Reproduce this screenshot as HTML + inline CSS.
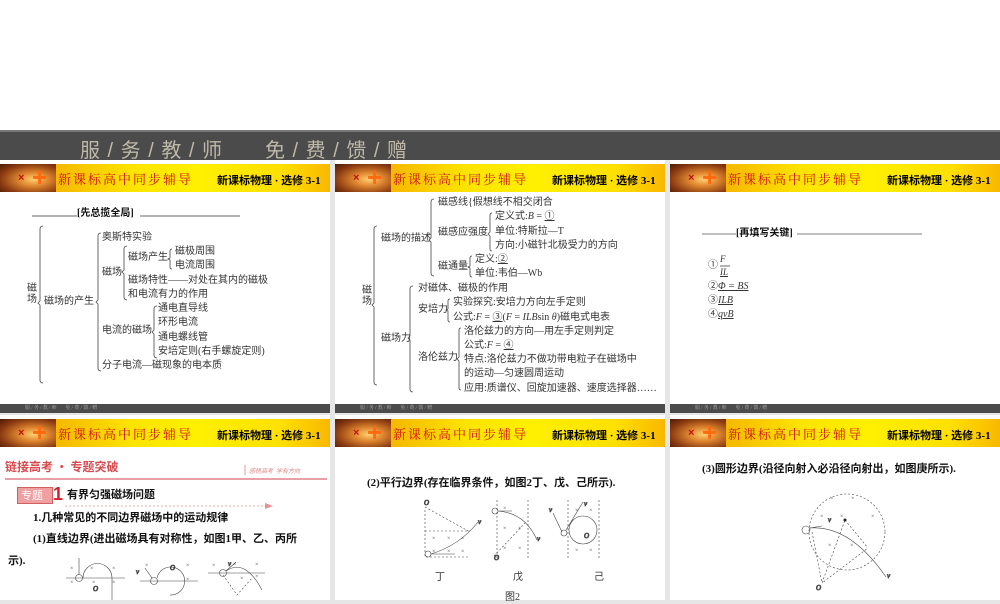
<!DOCTYPE html>
<html><head><meta charset="utf-8"><style>
*{margin:0;padding:0;box-sizing:border-box}
body{width:1000px;height:600px;overflow:hidden;background:#e6e6e6;position:relative;font-family:"Liberation Serif","Noto Serif CJK SC","Noto Sans CJK SC",serif;color:#222}
.top{position:absolute;left:0;top:0;width:1000px;height:130px;background:#fff}
.band{position:absolute;left:0;top:130px;width:1000px;height:30px;background:#4b4b4b;border-top:2px solid #777}
.band span{position:absolute;top:2px;font-family:"Liberation Sans","Noto Sans CJK SC",sans-serif;font-size:20px;color:#bdb8a8;letter-spacing:1px}
.s{position:absolute;width:330px;background:#fff;overflow:hidden}
.hd{position:absolute;left:0;top:4px;width:330px;height:28px;background:linear-gradient(90deg,#e07a10 0,#f5b800 17%,#fde400 40%,#fff000 60%,#ffe000 85%,#f8b800 100%)}
.img{position:absolute;left:0;top:0;width:56px;height:28px;background:radial-gradient(ellipse at 60% 55%,#ffd070 0,#e08830 30%,#8a3a10 70%,#4a1a08 100%)}
.plus{position:absolute;left:32px;top:-2px;color:#ff6a10;font:bold 26px "Liberation Sans",sans-serif}
.x{position:absolute;left:18px;top:8px;color:#c01010;font:bold 11px "Liberation Sans",sans-serif}
.ttl{position:absolute;left:58px;top:5px;font-family:"Noto Serif CJK SC",serif;font-size:13px;color:#d0101a;letter-spacing:2px}
.rt{position:absolute;left:217px;top:8px;font-family:"Liberation Serif","Noto Sans CJK SC",serif;font-weight:bold;font-size:11px;color:#000}
.ft{position:absolute;left:0;width:330px;height:9px;background:#4b4b4b;font-size:5px;color:#aaa;padding-left:25px;line-height:9px}
.t{position:absolute;font-size:10px;line-height:12px;white-space:nowrap;font-family:"Liberation Serif","Noto Sans CJK SC",sans-serif;color:#333}
.b{font-weight:bold;color:#111;font-size:11px}
svg{position:absolute;left:0;top:0}
</style></head><body>
<div class="top"></div>
<div class="band"><span style="left:80px">服 / 务 / 教 / 师</span><span style="left:265px">免 / 费 / 馈 / 赠</span></div>

<div class="s" style="left:0;top:160px;height:253px"><div class="hd"><div class="img"><span class="x">×</span><span class="plus">+</span></div><div class="ttl">新课标高中同步辅导</div><div class="rt">新课标物理 · 选修 3-1</div></div><div class="ft" style="top:244px">服 / 务 / 教 / 师 &nbsp;&nbsp;&nbsp;&nbsp;&nbsp; 免 / 费 / 馈 / 赠</div></div>
<div class="s" style="left:335px;top:160px;height:253px"><div class="hd"><div class="img"><span class="x">×</span><span class="plus">+</span></div><div class="ttl">新课标高中同步辅导</div><div class="rt">新课标物理 · 选修 3-1</div></div><div class="ft" style="top:244px">服 / 务 / 教 / 师 &nbsp;&nbsp;&nbsp;&nbsp;&nbsp; 免 / 费 / 馈 / 赠</div></div>
<div class="s" style="left:670px;top:160px;height:253px"><div class="hd"><div class="img"><span class="x">×</span><span class="plus">+</span></div><div class="ttl">新课标高中同步辅导</div><div class="rt">新课标物理 · 选修 3-1</div></div><div class="ft" style="top:244px">服 / 务 / 教 / 师 &nbsp;&nbsp;&nbsp;&nbsp;&nbsp; 免 / 费 / 馈 / 赠</div></div>
<div class="s" style="left:0;top:415px;height:185px"><div class="hd"><div class="img"><span class="x">×</span><span class="plus">+</span></div><div class="ttl">新课标高中同步辅导</div><div class="rt">新课标物理 · 选修 3-1</div></div></div>
<div class="s" style="left:335px;top:415px;height:185px"><div class="hd"><div class="img"><span class="x">×</span><span class="plus">+</span></div><div class="ttl">新课标高中同步辅导</div><div class="rt">新课标物理 · 选修 3-1</div></div></div>
<div class="s" style="left:670px;top:415px;height:185px"><div class="hd"><div class="img"><span class="x">×</span><span class="plus">+</span></div><div class="ttl">新课标高中同步辅导</div><div class="rt">新课标物理 · 选修 3-1</div></div></div>

<div class="t b" style="left:77px;top:208px;font-size:10px">[先总揽全局]</div>
<div class="t" style="left:27px;top:283px;width:11px;white-space:normal;line-height:11px">磁场</div>
<div class="t" style="left:44px;top:296px">磁场的产生</div>
<div class="t" style="left:102px;top:232px">奥斯特实验</div>
<div class="t" style="left:102px;top:267px">磁场</div>
<div class="t" style="left:128px;top:252px">磁场产生</div>
<div class="t" style="left:175px;top:246px">磁极周围</div>
<div class="t" style="left:175px;top:260px">电流周围</div>
<div class="t" style="left:128px;top:275px">磁场特性——对处在其内的磁极</div>
<div class="t" style="left:128px;top:289px">和电流有力的作用</div>
<div class="t" style="left:102px;top:325px">电流的磁场</div>
<div class="t" style="left:158px;top:303px">通电直导线</div>
<div class="t" style="left:158px;top:317px">环形电流</div>
<div class="t" style="left:158px;top:332px">通电螺线管</div>
<div class="t" style="left:158px;top:346px">安培定则(右手螺旋定则)</div>
<div class="t" style="left:102px;top:360px">分子电流—磁现象的电本质</div>

<div class="t" style="left:362px;top:285px;width:11px;white-space:normal;line-height:11px">磁场</div>
<div class="t" style="left:381px;top:233px">磁场的描述</div>
<div class="t" style="left:438px;top:197px">磁感线{假想线不相交闭合</div>
<div class="t" style="left:438px;top:227px">磁感应强度</div>
<div class="t" style="left:495px;top:211px">定义式:<i>B</i> = <u>①</u></div>
<div class="t" style="left:495px;top:226px">单位:特斯拉—T</div>
<div class="t" style="left:495px;top:240px">方向:小磁针北极受力的方向</div>
<div class="t" style="left:438px;top:261px">磁通量</div>
<div class="t" style="left:475px;top:254px">定义:<u>②</u></div>
<div class="t" style="left:475px;top:268px">单位:韦伯—Wb</div>
<div class="t" style="left:418px;top:283px">对磁体、磁极的作用</div>
<div class="t" style="left:418px;top:304px">安培力</div>
<div class="t" style="left:453px;top:297px">实验探究:安培力方向左手定则</div>
<div class="t" style="left:453px;top:312px">公式:<i>F</i> = <u>③</u>(<i>F</i> = <i>ILB</i>sin <i>θ</i>)磁电式电表</div>
<div class="t" style="left:381px;top:333px">磁场力</div>
<div class="t" style="left:418px;top:352px">洛伦兹力</div>
<div class="t" style="left:464px;top:326px">洛伦兹力的方向—用左手定则判定</div>
<div class="t" style="left:464px;top:340px">公式:<i>F</i> = <u>④</u></div>
<div class="t" style="left:464px;top:354px">特点:洛伦兹力不做功带电粒子在磁场中</div>
<div class="t" style="left:464px;top:368px">的运动—匀速圆周运动</div>
<div class="t" style="left:464px;top:383px">应用:质谱仪、回旋加速器、速度选择器……</div>

<div class="t b" style="left:736px;top:228px;font-size:10px">[再填写关键]</div>
<div class="t" style="left:708px;top:260px">①</div>
<div class="t" style="left:720px;top:253px;font-size:9px"><i>F</i></div>
<div class="t" style="left:720px;top:266px;font-size:9px"><i><u>IL</u></i></div>
<div class="t" style="left:708px;top:281px">②<i><u>Φ = BS</u></i></div>
<div class="t" style="left:708px;top:295px">③<i><u>ILB</u></i></div>
<div class="t" style="left:708px;top:309px">④<i><u>qvB</u></i></div>

<div class="t" style="left:5px;top:461px;font-size:12px;font-weight:bold;color:#d84a50;font-family:'Noto Sans CJK SC',sans-serif">链接高考 · 专题突破</div>
<div class="t" style="left:249px;top:466px;font-size:6px;color:#d88;font-style:italic">感悟高考 &nbsp;学有方向</div>
<div style="position:absolute;left:17px;top:487px;width:36px;height:17px;background:#f0a0a0;border:1px solid #d06060"></div>
<div class="t" style="left:21px;top:489px;font-size:11px;color:#fff;font-family:'Noto Sans CJK SC',sans-serif">专题</div>
<div class="t" style="left:53px;top:484px;font-size:18px;line-height:20px;color:#d02030;font-weight:bold;font-family:'Liberation Sans',sans-serif">1</div>
<div class="t b" style="left:67px;top:489px">有界匀强磁场问题</div>
<div class="t b" style="left:33px;top:512px">1.几种常见的不同边界磁场中的运动规律</div>
<div class="t b" style="left:33px;top:533px">(1)直线边界(进出磁场具有对称性，如图1甲、乙、丙所</div>
<div class="t b" style="left:8px;top:555px">示).</div>

<div class="t b" style="left:367px;top:477px">(2)平行边界(存在临界条件，如图2丁、戊、己所示).</div>
<div class="t" style="left:435px;top:572px">丁</div>
<div class="t" style="left:513px;top:572px">戊</div>
<div class="t" style="left:594px;top:572px">己</div>
<div class="t" style="left:505px;top:592px">图2</div>

<div class="t b" style="left:702px;top:463px">(3)圆形边界(沿径向射入必沿径向射出，如图庚所示).</div>

<svg width="1000" height="600" viewBox="0 0 1000 600" fill="none" stroke="#444" stroke-width="0.8" font-family="Liberation Serif" font-style="italic" font-size="7">
<path d="M32 216H77M140 216H240" stroke="#333"/>
<path d="M43 226q-3 0-3 3V301l-2 2 2 2V380q0 3 3 3"/>
<path d="M101 233q-3 0-3 3V300l-2 2 2 2V368q0 3 3 3"/>
<path d="M127 246q-3 0-3 3V270l-2 2 2 2V297q0 3 3 3"/>
<path d="M172 249q-2 0-2 2V258l-2 1 2 1V267q0 2 2 2"/>
<path d="M157 306q-3 0-3 3V330l-2 2 2 2V355q0 3 3 3"/>
<path d="M377 226q-3 0-3 3V303l-2 2 2 2V382q0 3 3 3"/>
<path d="M434 199q-3 0-3 3V238l-2 2 2 2V273q0 3 3 3"/>
<path d="M492 213q-2 0-2 2V232l-2 2 2 2V249q0 2 2 2"/>
<path d="M472 256q-2 0-2 2V266l-2 1 2 1V275q0 2 2 2"/>
<path d="M413 286q-3 0-3 3V336l-2 2 2 2V389q0 3 3 3"/>
<path d="M450 299q-2 0-2 2V309l-2 1 2 1V320q0 2 2 2"/>
<path d="M461 328q-2 0-2 2V357l-2 2 2 2V388q0 2 2 2"/>
<path d="M702 234H736M797 234H922" stroke="#555"/>
<path d="M720 266H730"/>
<path d="M5 479H327" stroke="#e08088" stroke-width="1.5"/>
<path d="M245 465V475" stroke="#e08088"/>
<path d="M65 506H265" stroke="#e89090" stroke-dasharray="2 2"/>
<path d="M265 503L273 506L265 509Z" fill="#e89090" stroke="none"/>
<g stroke-width="0.6">
<path d="M66 578H125M140 581H198M208 573H265"/>
<circle cx="79" cy="578" r="3.5"/><circle cx="154" cy="581" r="3.5"/><circle cx="223" cy="573" r="3.5"/>
<path d="M83 578A14 14 0 0 1 112 578V600M79 575V558M157 578A14 14 0 1 1 170 595M152 578L145 568M226 571Q245 558 262 590M226 571L236 562"/>
<path d="M223 575L237 595L252 578" stroke-dasharray="2 2"/>
</g>
<text x="93" y="591">O</text><text x="170" y="570">O</text><text x="136" y="574">v</text><text x="228" y="566">v</text>
<g font-style="normal" font-size="6" fill="#555" stroke="none"><text x="70" y="570">×</text><text x="90" y="570">×</text><text x="112" y="570">×</text><text x="70" y="584">×</text><text x="92" y="584">×</text><text x="112" y="584">×</text><text x="145" y="567">×</text><text x="186" y="567">×</text><text x="186" y="581">×</text><text x="212" y="567">×</text><text x="233" y="566">×</text><text x="255" y="566">×</text><text x="240" y="580">×</text><text x="255" y="578">×</text></g>
<g stroke-width="0.6">
<path d="M425 510V557H470M425 531H470M425 507L470 532M497 500V560M528 500V560M568 500V560M599 500V560" stroke-dasharray="2 2"/>
<circle cx="428" cy="554" r="3"/><circle cx="495" cy="511" r="3"/><circle cx="564" cy="533" r="3"/>
<path d="M431 554Q460 545 478 522M431 554H455M498 511Q525 513 537 540M498 511H512M566 530L583 502M562 532L553 513"/>
<circle cx="583" cy="530" r="14"/>
<path d="M494 556L525 523" stroke-dasharray="2 2"/>
</g>
<text x="424" y="505">O</text><text x="494" y="560">O</text><text x="584" y="538">O</text><text x="478" y="524">v</text><text x="537" y="541">v</text><text x="549" y="512">v</text><text x="584" y="506">v</text>
<g font-style="normal" font-size="6" fill="#555" stroke="none"><text x="432" y="540">×</text><text x="447" y="540">×</text><text x="461" y="540">×</text><text x="432" y="553">×</text><text x="447" y="553">×</text><text x="461" y="553">×</text><text x="503" y="510">×</text><text x="503" y="530">×</text><text x="518" y="530">×</text><text x="503" y="550">×</text><text x="518" y="550">×</text><text x="575" y="512">×</text><text x="589" y="512">×</text><text x="575" y="552">×</text><text x="589" y="552">×</text></g>
<g stroke-width="0.6">
<circle cx="847" cy="532" r="38" stroke-dasharray="2 2"/>
<circle cx="806" cy="530" r="4"/>
<path d="M810 528Q850 525 886 577"/>
<path d="M810 528L822 526"/>
<path d="M812 532L822 583L845 520L822 583L868 548M845 520L868 548" stroke-dasharray="2 2"/>
</g>
<circle cx="845" cy="520" r="1.5" fill="#222" stroke="none"/>
<text x="816" y="590">O</text><text x="887" y="578">v</text><text x="828" y="522">v</text>
<g font-style="normal" font-size="6" fill="#555" stroke="none"><text x="830" y="500">×</text><text x="851" y="500">×</text><text x="820" y="518">×</text><text x="840" y="518">×</text><text x="871" y="518">×</text><text x="828" y="547">×</text><text x="850" y="547">×</text></g>
</svg>
</body></html>
